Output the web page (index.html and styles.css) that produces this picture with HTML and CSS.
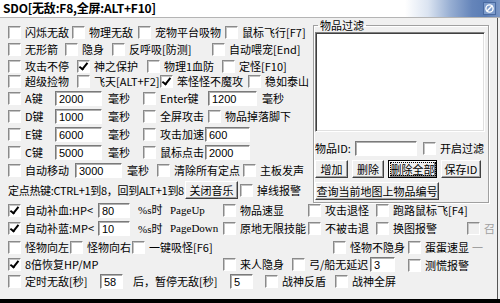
FILE: index.html
```html
<!DOCTYPE html>
<html lang="zh-CN">
<head>
<meta charset="utf-8">
<title>SDO</title>
<link rel="stylesheet" href="styles.css">
</head>
<body>
<div class="window">
  <div class="titlebar">
    <span class="title">SDO[无敌:F8,全屏:ALT+F10]</span>
    <svg class="sysicon" viewBox="0 0 13 13" aria-hidden="true">
      <rect x="0.5" y="0.5" width="12" height="12" fill="#7f9dcc" stroke="#4a6aa0"/>
      <circle cx="6.5" cy="6.5" r="3.6" fill="none" stroke="#fff" stroke-width="1.4"/>
      <line x1="3.6" y1="9.4" x2="9.4" y2="3.6" stroke="#fff" stroke-width="1.4"/>
    </svg>
  </div>
  <div class="client">
    <div class="top">
      <div class="left">
        <div class="row r1">
          <label class="ck"><i class="box"></i>闪烁无敌</label>
          <label class="ck"><i class="box"></i>物理无敌</label>
          <label class="ck"><i class="box"></i>宠物平台吸物</label>
          <label class="ck"><i class="box"></i>鼠标飞行[F7]</label>
        </div>
        <div class="row r2">
          <label class="ck"><i class="box"></i>无形箭</label>
          <label class="ck"><i class="box"></i>隐身</label>
          <label class="ck"><i class="box"></i>反呼吸[防测]</label>
          <label class="ck"><i class="box"></i>自动喂宠[End]</label>
        </div>
        <div class="row r3">
          <label class="ck"><i class="box"></i>攻击不停</label>
          <label class="ck"><i class="box on"></i>神之保护</label>
          <label class="ck"><i class="box"></i>物理1血防</label>
          <label class="ck"><i class="box"></i>定怪[F10]</label>
        </div>
        <div class="row r4">
          <label class="ck"><i class="box"></i>超级捡物</label>
          <label class="ck"><i class="box"></i>飞天[ALT+F2]</label>
          <label class="ck"><i class="box on"></i>笨怪怪不魔攻</label>
          <label class="ck"><i class="box"></i>稳如泰山</label>
        </div>
        <div class="row r5">
          <label class="ck"><i class="box"></i>A键</label>
          <span class="edit e-key">2000</span>
          <span>毫秒</span>
          <label class="ck"><i class="box"></i>Enter键</label>
          <span class="edit e-enter">1200</span>
          <span>毫秒</span>
        </div>
        <div class="row r6">
          <label class="ck"><i class="box"></i>D键</label>
          <span class="edit e-key">1000</span>
          <span>毫秒</span>
          <label class="ck"><i class="box"></i>全屏攻击</label>
          <label class="ck"><i class="box"></i>物品掉落脚下</label>
        </div>
        <div class="row r7">
          <label class="ck"><i class="box"></i>E键</label>
          <span class="edit e-key">6000</span>
          <span>毫秒</span>
          <label class="ck"><i class="box"></i>攻击加速</label>
          <span class="edit e-speed">600</span>
        </div>
        <div class="row r7">
          <label class="ck"><i class="box"></i>C键</label>
          <span class="edit e-key">5000</span>
          <span>毫秒</span>
          <label class="ck"><i class="box"></i>鼠标点击</label>
          <span class="edit e-speed">2000</span>
        </div>
        <div class="row r9">
          <label class="ck"><i class="box"></i>自动移动</label>
          <span class="edit e-key">3000</span>
          <span>毫秒</span>
          <label class="ck"><i class="box"></i>清除所有定点</label>
          <label class="ck"><i class="box"></i>主板发声</label>
        </div>
        <div class="row r10">
          <span class="hotkey">定点热键:CTRL+1到8，回到ALT+1到8</span>
          <span class="btn b-music">关闭音乐</span>
          <label class="ck"><i class="box"></i>掉线报警</label>
        </div>
      </div>
      <fieldset class="filter">
        <legend>物品过滤</legend>
        <div class="listbox"></div>
        <div class="idrow">
          <span>物品ID:</span>
          <span class="edit e-id"></span>
          <label class="ck"><i class="box"></i>开启过滤</label>
        </div>
        <div class="btnrow">
          <span class="btn b-add">增加</span>
          <span class="btn b-del">删除</span>
          <span class="btn def b-delall"><span class="focus">删除全部</span></span>
          <span class="btn b-save">保存ID</span>
        </div>
        <span class="btn b-query">查询当前地图上物品编号</span>
      </fieldset>
    </div>
    <div class="row r11">
      <label class="ck"><i class="box on"></i>自动补血:HP&lt;</label>
      <span class="edit e-hp">80</span>
      <span><span class="en">%s</span>时</span>
      <span class="en">PageUp</span>
      <label class="ck"><i class="box"></i>物品速显</label>
      <label class="ck"><i class="box"></i>攻击退怪</label>
      <label class="ck"><i class="box"></i>跑路鼠标飞[F4]</label>
    </div>
    <div class="row r12">
      <label class="ck"><i class="box on"></i>自动补蓝:MP&lt;</label>
      <span class="edit e-hp">10</span>
      <span><span class="en">%s</span>时</span>
      <span class="en">PageDown</span>
      <label class="ck"><i class="box"></i>原地无限技能</label>
      <label class="ck"><i class="box"></i>不被击退</label>
      <label class="ck"><i class="box"></i>换图报警</label>
      <label class="ck dis"><i class="box"></i>召</label>
    </div>
    <div class="row r13">
      <label class="ck"><i class="box"></i>怪物向左</label>
      <label class="ck"><i class="box"></i>怪物向右</label>
      <label class="ck"><i class="box"></i>一键吸怪[F6]</label>
      <label class="ck"><i class="box"></i>怪物不隐身</label>
      <label class="ck"><i class="box"></i>蛋蛋速显</label>
      <span class="dis">一</span>
    </div>
    <div class="row r14">
      <label class="ck"><i class="box on"></i>8倍恢复HP/MP</label>
      <label class="ck"><i class="box"></i>来人隐身</label>
      <label class="ck"><i class="box"></i>弓/船无延迟</label>
      <span class="edit e-bow">3</span>
      <label class="ck low"><i class="box"></i>测慌报警</label>
    </div>
    <div class="row r15">
      <label class="ck"><i class="box"></i>定时无敌[秒]</label>
      <span class="edit e-sec">58</span>
      <span>后，暂停无敌[秒]</span>
      <span class="edit e-sec">5</span>
      <label class="ck"><i class="box"></i>战神反盾</label>
      <label class="ck"><i class="box"></i>战神全屏</label>
    </div>
  </div>
</div>
</body>
</html>
```

FILE: styles.css
```css
* { box-sizing: border-box; }

html, body { margin: 0; }

body {
  background: #000;
  font-family: "Noto Sans CJK SC", "Noto Sans", sans-serif;
  font-size: 11px;
  color: #000;
}

.window {
  width: 500px;
  height: 299px;
  background: #f0f0f0;
  display: flex;
  flex-direction: column;
  overflow: hidden;
}

.titlebar {
  flex: none;
  height: 18px;
  display: flex;
  align-items: center;
  justify-content: space-between;
  padding: 0 4px 1px 3px;
  border-bottom: 1px solid #b4b4b4;
  background: linear-gradient(90deg, #fff 0, #fff 405px, #dbe4f1 428px, #98afd3 450px, #6585ba 472px, #5a7cb4 486px, #7c98c6 500px);
}

.title {
  font-weight: bold;
  font-size: 12px;
  line-height: 16px;
  letter-spacing: -0.2px;
}

.sysicon { width: 13px; height: 13px; display: block; }

.client {
  flex: 1;
  padding-left: 8px;
  margin-right: 2px;
  border-right: 1px solid #555;
}

.top { display: flex; }

.left {
  width: 305px;
  height: 183px;
  padding-top: 6px;
}

.row {
  display: grid;
  align-items: center;
  white-space: nowrap;
  line-height: 13px;
}

.r1 { height: 17px; grid-template-columns: 64px 66px 87px 1fr; }
.r2 { height: 17px; grid-template-columns: 57px 47px 100px 1fr; }
.r3 { height: 16px; grid-template-columns: 69px 70px 75px 1fr; }
.r4 { height: 15px; grid-template-columns: 69px 83px 88px 1fr; }
.r5 { height: 18px; grid-template-columns: 47px 53px 35px 65px 54px 1fr; }
.r6 { height: 18px; grid-template-columns: 47px 53px 35px 65px 1fr; }
.r7 { height: 18px; grid-template-columns: 47px 53px 35px 62px 1fr; }
.r9 { height: 18px; grid-template-columns: 67px 52px 30px 86px 1fr; }
.r10 { height: 22px; grid-template-columns: 177px 55px 1fr; }

.r11 { height: 18px; grid-template-columns: 90px 40px 32px 53px 85px 68px 1fr; }
.r12 { height: 19px; grid-template-columns: 90px 40px 32px 53px 85px 68px 91px 1fr; }
.r13 { height: 19px; grid-template-columns: 62px 62px 201px 75px 64px 1fr; }
.r14 { height: 15px; grid-template-columns: 215px 69px 78px 38px 1fr; }
.r15 { height: 18px; grid-template-columns: 92px 33px 97px 35px 70px 1fr; }

.ck {
  display: inline-flex;
  align-items: center;
}

.box {
  position: relative;
  flex: none;
  width: 13px;
  height: 13px;
  margin-right: 4px;
  background: #fff;
  border: 1px solid;
  border-color: #8a8a8a #fff #fff #8a8a8a;
  box-shadow: inset 1px 1px 0 #c4c4c4;
}

.box.on::after {
  content: "";
  position: absolute;
  left: 3px;
  top: 0;
  width: 3px;
  height: 7px;
  border: solid #000;
  border-width: 0 2px 2px 0;
  transform: rotate(38deg);
}

.dis { color: #a0a0a0; }
.dis .box { background: #f0f0f0; }
.low { align-self: end; }

.en {
  font-family: "Liberation Serif", serif;
  font-size: 11px;
}

.edit {
  display: block;
  height: 15px;
  padding: 1px 2px 0 3px;
  background: #fff;
  border: 1px solid;
  border-color: #7a7a7a #fff #fff #7a7a7a;
  box-shadow: inset 1px 1px 0 #b0b0b0;
  font-family: "Liberation Sans", sans-serif;
  font-size: 11px;
  line-height: 12px;
}

.e-key { width: 47px; }
.e-enter { width: 49px; }
.e-speed { width: 45px; }
.e-hp { width: 32px; }
.e-bow { width: 25px; }
.e-sec { width: 23px; }
.e-id { width: 62px; }

.hotkey { letter-spacing: -0.3px; }

.btn {
  display: flex;
  align-items: center;
  justify-content: center;
  height: 18px;
  background: #f0f0f0;
  border: 1px solid;
  border-color: #fff #404040 #404040 #fff;
  box-shadow: inset -1px -1px 0 #a0a0a0;
  white-space: nowrap;
}

.btn.def {
  border-color: #000;
  box-shadow: inset 1px 1px 0 #fff, inset -2px -2px 0 #808080;
}

.focus {
  outline: 1px dotted #000;
  outline-offset: 0;
  line-height: 12px;
}

.b-music { width: 53px; }
.b-add { width: 33px; }
.b-del { width: 32px; }
.b-delall { width: 49px; }
.b-save { width: 40px; }
.b-query { width: 124px; margin-top: 4px; }

.filter {
  width: 176px;
  height: 185px;
  margin: 0 0 -2px 0;
  padding: 0 0 0 1px;
  min-width: 0;
  border: 1px solid #a0a0a0;
  box-shadow: inset 1px 1px 0 #fff, 1px 1px 0 #fff;
}

.filter legend {
  margin-left: 3px;
  padding: 0 2px;
  line-height: 14px;
}

.listbox {
  width: 170px;
  height: 100px;
  background: #fff;
  border: 1px solid;
  border-color: #808080 #fff #fff #808080;
  box-shadow: inset 1px 1px 0 #404040, inset -1px -1px 0 #e0e0e0;
}

.idrow {
  display: grid;
  grid-template-columns: 40px 68px 1fr;
  align-items: center;
  height: 15px;
  margin-top: 8px;
  white-space: nowrap;
}

.btnrow {
  display: flex;
  gap: 4px;
  margin-top: 5px;
}
```
